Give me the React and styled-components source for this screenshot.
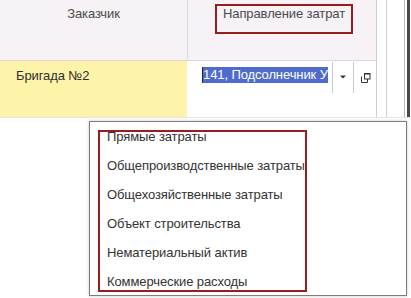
import React from "react";
import styled, { createGlobalStyle } from "styled-components";

const Global = createGlobalStyle`
  html, body { margin: 0; padding: 0; background: #fff; }
  * { box-sizing: border-box; }
`;

const Page = styled.div`
  position: relative;
  width: 411px;
  height: 298px;
  overflow: hidden;
  background: #fff;
  font-family: "Liberation Sans", Arial, sans-serif;
  font-size: 13px;
  line-height: 15px;
  letter-spacing: -0.1px;
`;

const TableArea = styled.div`
  display: flex;
  height: 118px;
  border-bottom: 1px solid #e4e4e4;
`;

const Columns = styled.div`
  width: 377px;
  display: flex;
  flex-direction: column;
  border-right: 1px solid #cfcfcf;
`;

const HeaderRow = styled.div`
  display: flex;
  height: 61px;
  background: #f6f2f6;
  border-bottom: 1px solid #dadada;
`;

const HeadCell = styled.div`
  width: ${(p) => p.$w}px;
  flex: ${(p) => (p.$w ? "none" : "1")};
  display: flex;
  justify-content: ${(p) => (p.$center ? "center" : "flex-start")};
  padding-top: ${(p) => p.$pt}px;
  padding-left: ${(p) => p.$pl || 0}px;
  color: #4a4a4a;
  border-right: ${(p) => (p.$divider ? "1px solid #dcdcdc" : "none")};
`;

const Marked = styled.div`
  width: 138px;
  height: 30px;
  border: 2px solid #9b1c1c;
  padding-left: 6px;
`;

const BodyRow = styled.div`
  display: flex;
  flex: 1;
`;

const NameCell = styled.div`
  width: 187px;
  background: #fdf3a9;
  color: #2e2e2e;
  padding: 7px 0 0 16px;
`;

const EditCell = styled.div`
  flex: 1;
  display: flex;
  align-items: flex-start;
  padding: 1px 0 0 15px;
`;

const Input = styled.div`
  width: 130px;
  height: 31px;
  padding-top: 5px;
  overflow: hidden;
  white-space: nowrap;
`;

const Selection = styled.span`
  display: inline-block;
  height: 16px;
  line-height: 16px;
  background: #4f6ccc;
  color: #fff;
  border-left: 1px solid #222;
  white-space: nowrap;
`;

const DropButton = styled.div`
  width: 22px;
  height: 31px;
  border-left: 1px solid #cacaca;
  border-right: 1px solid #cacaca;
  display: flex;
  justify-content: center;
  padding-top: 13px;
`;

const OpenButton = styled.div`
  margin-left: 7px;
  padding-top: 11px;
  display: flex;
`;

const Gutter = styled.div`
  width: ${(p) => p.$w}px;
  border-right: 1px solid ${(p) => p.$c};
`;

const Edge = styled.div`
  width: 3px;
  margin-left: 2px;
  background: #4a4a4a;
`;

const Popup = styled.div`
  position: absolute;
  left: 89px;
  top: 121px;
  width: 318px;
  height: 175px;
  background: #fff;
  border: 1px solid #7e7e7e;
  box-shadow: 0 0 3px rgba(0, 0, 0, 0.22);
  overflow: hidden;
`;

const List = styled.ul`
  list-style: none;
  margin: 0;
  padding: 0;
`;

const Item = styled.li`
  height: 29px;
  line-height: 29px;
  padding-left: 17px;
  color: #333;
  white-space: nowrap;
`;

const Frame = styled.div`
  position: absolute;
  left: 8px;
  top: 8px;
  width: 209px;
  height: 162px;
  border: 2px solid #9b1c1c;
  pointer-events: none;
`;

const items = [
  "Прямые затраты",
  "Общепроизводственные затраты",
  "Общехозяйственные затраты",
  "Объект строительства",
  "Нематериальный актив",
  "Коммерческие расходы",
];

export default function App() {
  return (
    <>
      <Global />
      <Page>
        <TableArea>
          <Columns>
            <HeaderRow>
              <HeadCell $w={188} $center $pt={6} $divider>
                Заказчик
              </HeadCell>
              <HeadCell $pt={4} $pl={27}>
                <Marked>Направление затрат</Marked>
              </HeadCell>
            </HeaderRow>
            <BodyRow>
              <NameCell>Бригада №2</NameCell>
              <EditCell>
                <Input>
                  <Selection>141, Подсолнечник У</Selection>
                </Input>
                <DropButton>
                  <svg width="6" height="4" viewBox="0 0 6 4">
                    <path d="M0 0.5 H6 L3 3.5 Z" fill="#333" />
                  </svg>
                </DropButton>
                <OpenButton>
                  <svg width="10" height="10" viewBox="0 0 10 10">
                    <rect x="3.5" y="0.5" width="5.5" height="5.5" fill="none" stroke="#333" />
                    <path d="M3.5 1 H9" stroke="#333" />
                    <path d="M0.5 3.5 V9.5 H6.5 V6" fill="none" stroke="#333" />
                  </svg>
                </OpenButton>
              </EditCell>
            </BodyRow>
          </Columns>
          <Gutter $w={10} $c="#cfcfcf" />
          <Gutter $w={18} $c="#b8b8b8" />
          <Edge />
        </TableArea>
        <Popup>
          <List>
            {items.map((t) => (
              <Item key={t}>{t}</Item>
            ))}
          </List>
          <Frame />
        </Popup>
      </Page>
    </>
  );
}
